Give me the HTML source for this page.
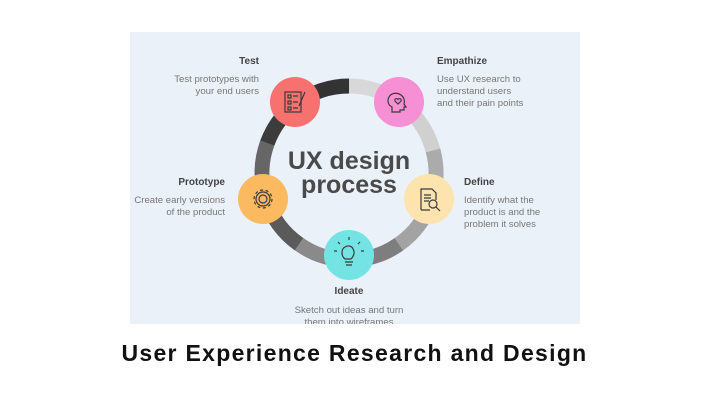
<!DOCTYPE html>
<html><head><meta charset="utf-8"><style>
html,body{margin:0;padding:0;background:#fff;width:709px;height:407px;overflow:hidden;font-family:"Liberation Sans",sans-serif}
.img{position:absolute;left:130px;top:32px;width:450px;height:292px;background:#ebf1f9;overflow:hidden}
.t{position:absolute;font-size:10px;font-weight:bold;color:#444}
.d{position:absolute;font-size:9.6px;color:#777;line-height:12px;white-space:nowrap}
.r{text-align:right}
.title{position:absolute;left:0;width:709px;top:340px;text-align:center;font-size:23px;font-weight:bold;color:#111;letter-spacing:1.3px}
</style></head><body>
<div class="img">
<svg width="450" height="292" style="position:absolute;left:0;top:0">
<g fill="none" stroke-width="15">
<circle cx="219" cy="141" r="87" stroke="#d8d8d8" stroke-dasharray="56.2 600" transform="rotate(-90 219 141)"/>
<circle cx="219" cy="141" r="87" stroke="#d0d0d0" stroke-dasharray="57.7 600" transform="rotate(-53 219 141)"/>
<circle cx="219" cy="141" r="87" stroke="#ababab" stroke-dasharray="50.1 600" transform="rotate(-15 219 141)"/>
<circle cx="219" cy="141" r="87" stroke="#a3a3a3" stroke-dasharray="56.2 600" transform="rotate(18 219 141)"/>
<circle cx="219" cy="141" r="87" stroke="#7e7e7e" stroke-dasharray="53.1 600" transform="rotate(55 219 141)"/>
<circle cx="219" cy="141" r="87" stroke="#8a8a8a" stroke-dasharray="53.1 600" transform="rotate(90 219 141)"/>
<circle cx="219" cy="141" r="87" stroke="#5a5a5a" stroke-dasharray="57.7 600" transform="rotate(125 219 141)"/>
<circle cx="219" cy="141" r="87" stroke="#666" stroke-dasharray="56.2 600" transform="rotate(163 219 141)"/>
<circle cx="219" cy="141" r="87" stroke="#3c3c3c" stroke-dasharray="50.1 600" transform="rotate(200 219 141)"/>
<circle cx="219" cy="141" r="87" stroke="#333" stroke-dasharray="56.2 600" transform="rotate(233 219 141)"/>
</g>
<circle cx="165" cy="70" r="25" fill="#f7716f"/>
<circle cx="269" cy="70" r="25" fill="#f78fd4"/>
<circle cx="133" cy="167" r="25" fill="#fbb960"/>
<circle cx="299" cy="167" r="25" fill="#fde3ad"/>
<circle cx="219" cy="223" r="25" fill="#73e3e3"/>
<g fill="none" stroke="#3a3a3a" stroke-width="1.2">
<rect x="155" y="60" width="16" height="20"/><rect x="158" y="63" width="3" height="3"/><rect x="158" y="69" width="3" height="3"/><rect x="158" y="75" width="3" height="3"/><path d="M163 64h5M163 70h5M163 76h5M175 60l-6 14"/>
<path d="M262 80v-5c-4-2-5-6-3-10 2-4 8-5 12-2 3 2 4 6 3 9l2 3h-2v3h-4v2z"/><path d="M268 72l-3-3a1.6 1.6 0 0 1 3-1.5 1.6 1.6 0 0 1 3 1.5z"/>
<circle cx="133" cy="167" r="4"/><circle cx="133" cy="167" r="9" stroke-dasharray="3 2.6"/><circle cx="133" cy="167" r="7"/>
<path d="M291 178v-21h11l4 4v7M291 178h9M294 163h7M294 166h7M294 169h5"/><circle cx="303" cy="172" r="4"/><path d="M306 175l4 4"/>
<path d="M215 230h8M216 233h6M215 227c-4-3-4-10 0-12 3-2 7-1 8 2 2 3 1 7-2 10zM219 208v-3M210 212l-2-2M228 212l2-2M207 219h-3M231 219h3"/>
</g>
<text x="219" y="137" text-anchor="middle" font-family="Liberation Sans" font-weight="bold" font-size="25" fill="#4a4a4a">UX design</text>
<text x="219" y="161" text-anchor="middle" font-family="Liberation Sans" font-weight="bold" font-size="25" fill="#4a4a4a">process</text>
</svg>
<div class="t r" style="right:321px;top:24px">Test</div>
<div class="d r" style="right:321px;top:42px">Test prototypes with<br>your end users</div>
<div class="t" style="left:307px;top:24px">Empathize</div>
<div class="d" style="left:307px;top:42px">Use UX research to<br>understand users<br>and their pain points</div>
<div class="t r" style="right:355px;top:145px">Prototype</div>
<div class="d r" style="right:355px;top:163px">Create early versions<br>of the product</div>
<div class="t" style="left:334px;top:145px">Define</div>
<div class="d" style="left:334px;top:163px">Identify what the<br>product is and the<br>problem it solves</div>
<div class="t" style="left:0;width:438px;text-align:center;top:254px">Ideate</div>
<div class="d" style="left:0;width:438px;text-align:center;top:273px">Sketch out ideas and turn<br>them into wireframes</div>
</div>
<div class="title">User Experience Research and Design</div>
</body></html>
